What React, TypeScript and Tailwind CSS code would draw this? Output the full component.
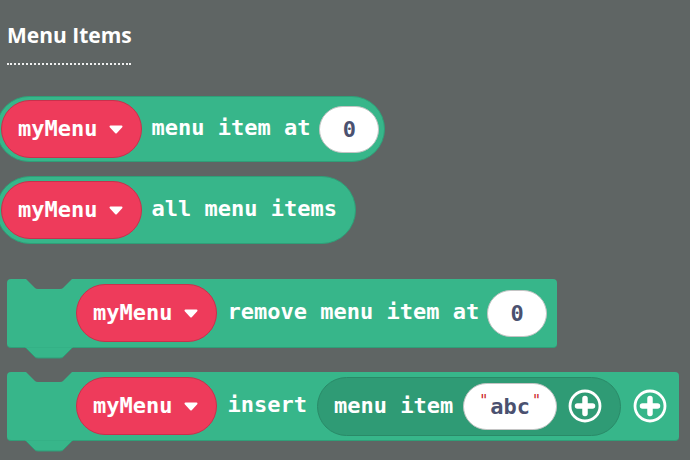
import { FC, ReactNode } from "react";

const mono = { fontFamily: '"DejaVu Sans Mono", "Liberation Mono", monospace' };

const Caret: FC = () => (
  <svg width="14" height="9" viewBox="0 0 14 9" className="shrink-0">
    <path d="M1.5 1.5 H12.5 L7 7.5 Z" fill="white" stroke="white" strokeWidth="2" strokeLinejoin="round" />
  </svg>
);

const MenuVar: FC = () => (
  <div className="flex items-center h-[58px] pl-[16px] pr-[18px] gap-[12px] rounded-full bg-[#ee3b5b] border border-[#c9304c] shrink-0">
    <span className="text-white font-bold text-[22px] leading-none">myMenu</span>
    <Caret />
  </div>
);

const Label: FC<{ children: ReactNode }> = ({ children }) => (
  <span className="text-white font-bold text-[22px] leading-none whitespace-pre">{children}</span>
);

const NumField: FC<{ value: string }> = ({ value }) => (
  <div className="flex items-center justify-center w-[60px] h-[47px] rounded-full bg-white border border-[#c4c4c4] text-[#4b5170] font-bold text-[22px]">
    {value}
  </div>
);

const PlusButton: FC = () => (
  <svg width="34" height="34" viewBox="0 0 34 34" className="shrink-0">
    <circle cx="17" cy="17" r="15" fill="none" stroke="white" strokeWidth="2.8" />
    <path d="M17 9.5 V24.5 M9.5 17 H24.5" stroke="white" strokeWidth="5.5" strokeLinecap="round" />
  </svg>
);

const Notches: FC = () => (
  <>
    <svg width="48" height="11" viewBox="0 0 48 11" className="absolute top-[-1px] left-[18px]">
      <path d="M0 0 L10 10 Q11 11 13 11 H35 Q37 11 38 10 L48 0 Z" fill="#5f6564" />
    </svg>
    <svg width="48" height="12" viewBox="0 0 48 12" className="absolute top-full left-[18px]">
      <path d="M0 0 L10 10 Q11 11 13 11 H35 Q37 11 38 10 L48 0 Z" fill="#37b68a" stroke="#2f9f78" strokeWidth="1" />
      <rect x="0" y="-1" width="48" height="1.5" fill="#37b68a" />
    </svg>
  </>
);

export default function App() {
  return (
    <div className="w-[690px] h-[460px] bg-[#5f6564] overflow-hidden">
      <div className="pl-[7px] pt-[21px]">
        <h2
          className="text-white font-bold text-[21px] leading-[28px]"
          style={{ fontFamily: '"Open Sans", "Noto Sans", sans-serif' }}
        >
          Menu Items
        </h2>
        <div className="mt-[14px] w-[124px] border-b-2 border-dotted border-white/90" />
      </div>

      <div className="flex flex-col items-start" style={mono}>
        <div className="mt-[31px] -ml-[4px] flex items-center h-[66px] pl-[4px] pr-[5px] rounded-full bg-[#37b68a] border border-[#2f9f78]">
          <MenuVar />
          <div className="ml-[9px] mr-[9px]">
            <Label>menu item at</Label>
          </div>
          <NumField value="0" />
        </div>

        <div className="mt-[14px] -ml-[4px] flex items-center h-[68px] pl-[4px] pr-[18px] rounded-full bg-[#37b68a] border border-[#2f9f78]">
          <MenuVar />
          <div className="ml-[9px]">
            <Label>all menu items</Label>
          </div>
        </div>

        <div className="relative mt-[35px] ml-[7px] flex items-center h-[69px] pl-[69px] pr-[10px] rounded-[4px] bg-[#37b68a] border-b border-[#2f9f78]">
          <Notches />
          <MenuVar />
          <div className="ml-[10px] mr-[8px]">
            <Label>remove menu item at</Label>
          </div>
          <NumField value="0" />
        </div>

        <div className="relative mt-[24px] ml-[7px] flex items-center h-[69px] pl-[69px] pr-[12px] rounded-[4px] bg-[#37b68a] border-b border-[#2f9f78]">
          <Notches />
          <MenuVar />
          <div className="ml-[10px] mr-[10px]">
            <Label>insert</Label>
          </div>
          <div className="flex items-center h-[59px] pl-[16px] pr-[18px] rounded-full bg-[#2f9b75] border border-[#2a8a68]">
            <Label>menu item</Label>
            <div className="ml-[10px] flex items-center justify-center w-[94px] h-[47px] rounded-full bg-white border border-[#c4c4c4]">
              <span className="text-[#cc1f2a] text-[15px] self-start mt-[6px] font-normal">"</span>
              <span className="mx-[2px] text-[#4b5170] font-bold text-[22px]">abc</span>
              <span className="text-[#cc1f2a] text-[15px] self-start mt-[6px] font-normal">"</span>
            </div>
            <div className="ml-[11px]">
              <PlusButton />
            </div>
          </div>
          <div className="ml-[12px]">
            <PlusButton />
          </div>
        </div>
      </div>
    </div>
  );
}
